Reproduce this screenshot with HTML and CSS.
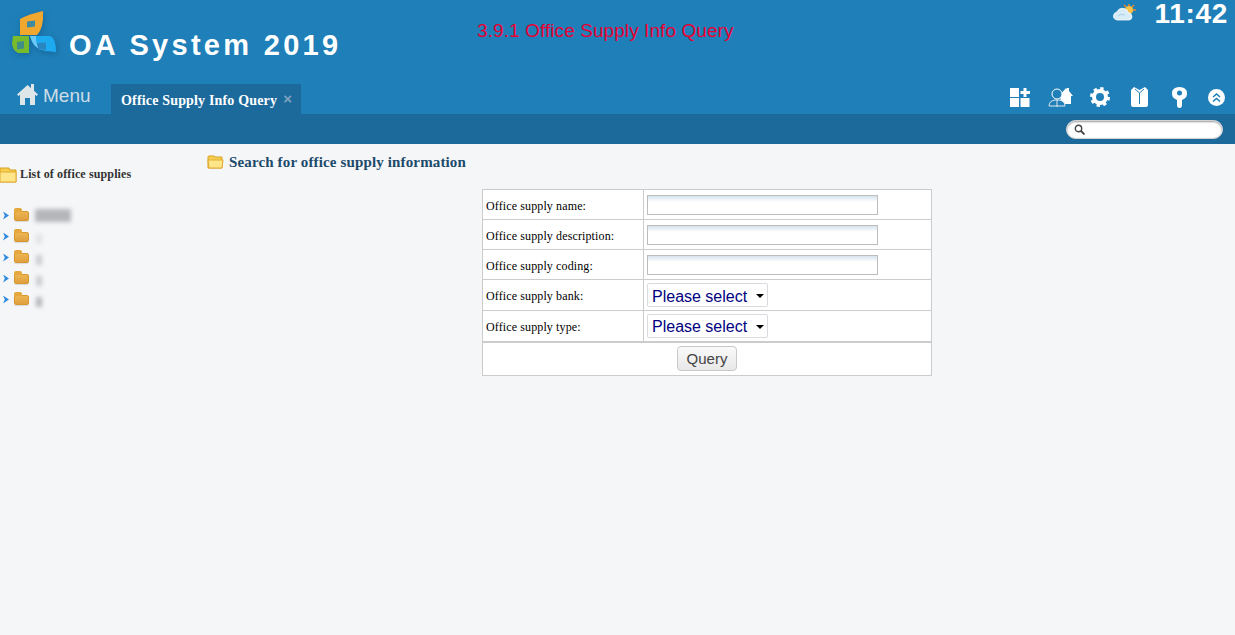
FILE: index.html
```html
<!DOCTYPE html>
<html lang="en">
<head>
<meta charset="utf-8">
<title>OA System 2019</title>
<link rel="stylesheet" href="styles.css">
</head>
<body>
<header class="header">
  <div class="top">
    <div class="brand">
      <svg class="logo" width="50" height="45" viewBox="10 9 50 45">
        <path d="M20 19Q29 14 43 11Q44 28 37 35L20 35Z" fill="#f2a72e"/>
        <path d="M27 21.500L35 20.500L35 26.500L27 27.500Z" fill="#3f8aa0"/>
        <path d="M13 36L29 36L29 53L18 53Q12 50 12 43Z" fill="#78bb2c"/>
        <path d="M17 42L24 41L24 48.500L17 49.500Z" fill="#3f8f88"/>
        <path d="M30 36L50 36Q56 38 56 52L45 51Q33 49 30 36Z" fill="#1eaaf0"/>
        <path d="M30 36L36 36Q35 44 41 50Q33 47 30 36Z" fill="#6cc8f6"/>
        <path d="M37 43L46 42.500L46 50L38 49Z" fill="#2a86c0"/>
      </svg>
      <span class="brand-name">OA System 2019</span>
    </div>
    <div class="page-title">3.9.1 Office Supply Info Query</div>
    <div class="status">
      <svg class="weather" width="23" height="17" viewBox="0 0 23 17">
        <circle cx="16" cy="6" r="4" fill="#f6c24a"/>
        <path d="M16 0V2M21 1L19 3M23 6H20M11 1L13 3" stroke="#e88a2a" stroke-width="1.500"/>
        <path d="M4 16Q0 15 0.500 11.500Q1 8.500 4 8Q6 3.500 11 4.500Q15 5.500 15 8.500Q19 9 19 13Q18.500 16 16 16Z" fill="#d8ecf8" stroke="#f4fafd" stroke-width="0.800"/>
        <path d="M5 12Q8 9 12 11" fill="none" stroke="#a9d0ea"/>
      </svg>
      <span class="clock">11:42</span>
    </div>
  </div>
  <nav class="nav">
    <div class="menu">
      <svg width="21" height="23" viewBox="0 0 21 23">
        <path d="M10.500 3L0 12.500L1.500 14L3 12.700L3 23L8 23L8 16L13 16L13 23L18 23L18 12.700L19.500 14L21 12.500L17 8.800L17 2L14 2L14 6Z" fill="#dfe6ea"/>
      </svg>
      <span class="menu-label">Menu</span>
    </div>
    <div class="tab"><span>Office Supply Info Query</span><span class="tab-close">×</span></div>
    <div class="tools">
      <svg width="20" height="20" viewBox="0 0 20 20" fill="#fff"><rect x="0" y="1" width="9" height="9"/><rect x="0" y="11" width="9" height="9"/><rect x="10.500" y="11" width="9" height="9"/><path d="M13.500 1H16.500V4H20V7H16.500V10H13.500V7H10.500V4H13.500Z"/></svg>
      <svg class="gap-18" width="25" height="20" viewBox="0 0 25 20"><path d="M12 8L18 1L19 2V1H21V4L25 9H23V17H13Z" fill="#fff"/><circle cx="9" cy="7" r="5" fill="#1f7fb8" stroke="#fff"/><path d="M1 19Q1 14 7 13L11 13Q17 14 17 19Z" fill="#1f7fb8" stroke="#dfe8ee"/><path d="M9 12V20" stroke="#dfe8ee"/></svg>
      <svg class="gap-17" width="20" height="20" viewBox="0 0 20 20"><circle cx="10" cy="10" r="6" fill="none" stroke="#fff" stroke-width="4"/><circle cx="10" cy="10" r="8.500" fill="none" stroke="#fff" stroke-width="3" stroke-dasharray="3.300 3.370"/></svg>
      <svg class="gap-21" width="17" height="20" viewBox="0 0 17 20"><path d="M3 0L8.500 3L14 0L17 3V18Q17 20 15 20H2Q0 20 0 18V3Z" fill="#fff"/><path d="M8.500 6V17M4 2L8.500 6L13 2" fill="none" stroke="#1f7fb8"/></svg>
      <svg class="gap-24" width="15" height="21" viewBox="0 0 15 21"><path d="M5 13Q0 11 0 6.500Q0 0 7.500 0Q15 0 15 6.500Q15 11 10 13V18Q10 21 7.500 21Q5 21 5 18Z" fill="#fff"/><circle cx="7.500" cy="6" r="2.500" fill="#1f7fb8"/></svg>
      <svg class="gap-21" width="17" height="17" viewBox="0 0 17 17"><circle cx="8.500" cy="8.500" r="8.500" fill="#fff"/><path d="M5 8L8.500 5L12 8M5 12.500L8.500 9.500L12 12.500" fill="none" stroke="#1f7fb8" stroke-width="1.600"/></svg>
    </div>
  </nav>
</header>
<div class="subbar">
  <div class="search">
    <svg width="11" height="11" viewBox="0 0 11 11"><circle cx="4.500" cy="4.500" r="3.200" fill="none" stroke="#444" stroke-width="1.400"/><path d="M7 7L10.500 10.500" stroke="#444" stroke-width="1.800"/></svg>
  </div>
</div>
<main class="main">
  <aside class="side">
    <div class="side-title">
      <svg width="17" height="16" viewBox="0 0 17 16"><path d="M0 1H9L10 3H16V15H0Z" fill="#f6cf50" stroke="#d9a020"/><path d="M0 5H16V15H0Z" fill="#ffe68a" stroke="#e0aa30"/></svg>
      <span>List of office supplies</span>
    </div>
    <ul class="tree">
      <li class="tree-row"><i class="arrow"></i><i class="folder"></i><i class="blur blur-long"></i></li>
      <li class="tree-row"><i class="arrow"></i><i class="folder"></i><i class="blur blur-faint"></i></li>
      <li class="tree-row"><i class="arrow"></i><i class="folder"></i><i class="blur"></i></li>
      <li class="tree-row"><i class="arrow"></i><i class="folder"></i><i class="blur"></i></li>
      <li class="tree-row"><i class="arrow"></i><i class="folder"></i><i class="blur blur-dark"></i></li>
    </ul>
  </aside>
  <section class="content">
    <h2 class="content-title">
      <svg width="17" height="14" viewBox="0 0 17 14"><path d="M1 2Q1 1 2 1H7L8 2H15V13H1Z" fill="#f6cf50" stroke="#d9a020"/><path d="M1 5H16L15 13H2Z" fill="#ffe68a" stroke="#e0aa30"/></svg>
      <span>Search for office supply information</span>
    </h2>
    <table class="form">
      <tr class="row-a"><th>Office supply name:</th><td><input class="field" type="text"></td></tr>
      <tr class="row-a"><th>Office supply description:</th><td><input class="field" type="text"></td></tr>
      <tr class="row-a"><th>Office supply coding:</th><td><input class="field" type="text"></td></tr>
      <tr class="row-b"><th>Office supply bank:</th><td><span class="pick"><select><option>Please select</option></select></span></td></tr>
      <tr class="row-b row-last"><th>Office supply type:</th><td><span class="pick"><select><option>Please select</option></select></span></td></tr>
      <tr class="row-c"><td colspan="2"><button class="query" type="button">Query</button></td></tr>
    </table>
  </section>
</main>
</body>
</html>
```
FILE: styles.css
```css
* { box-sizing: border-box; }
html, body { height: 100%; }
body {
  margin: 0;
  background: #f5f6f8;
  font-family: "Liberation Sans", Arial, sans-serif;
  overflow: hidden;
}
.header { height: 114px; background: #1f7fb8; color: #fff; }
.top { height: 84px; display: flex; align-items: flex-start; }
.brand { width: 477px; display: flex; align-items: flex-start; padding: 9px 0 0 10px; }
.logo { flex: none; filter: drop-shadow(1px 2px 3px rgba(0, 50, 90, 0.3)); }
.brand-name {
  margin: 19px 0 0 9px;
  font-size: 29px;
  font-weight: bold;
  letter-spacing: 3.3px;
  line-height: 34px;
  white-space: nowrap;
}
.page-title { margin-top: 20px; font-size: 19px; letter-spacing: 0.08px; line-height: 22px; color: #e60033; white-space: nowrap; }
.status { margin-left: auto; display: flex; align-items: flex-start; padding-right: 7px; }
.weather { margin: 4px 18px 0 0; }
.clock { font-size: 28px; font-weight: bold; line-height: 28px; letter-spacing: 0.7px; }
.nav { height: 30px; display: flex; align-items: flex-end; }
.menu {
  width: 111px;
  height: 32px;
  align-self: flex-start;
  margin-top: -2px;
  padding-left: 17px;
  display: flex;
  align-items: flex-start;
  gap: 5px;
  font-size: 19px;
  line-height: 24px;
  color: #cfdde6;
}
.menu-label { margin-top: 2px; }
.tab {
  width: 190px;
  height: 30px;
  background: #1c6a9c;
  padding: 8px 0 0 10px;
  font-family: "Liberation Serif", serif;
  font-weight: bold;
  font-size: 14px;
  letter-spacing: 0.17px;
  line-height: 17px;
  white-space: nowrap;
  display: flex;
  gap: 6px;
}
.tab-close { color: #7ea3bd; font-family: "Liberation Sans", sans-serif; font-size: 15px; line-height: 14px; }
.tools {
  margin-left: auto;
  align-self: flex-start;
  padding: 1px 10px 0 0;
  display: flex;
  align-items: center;
  height: 25px;
}
.gap-17 { margin-left: 17px; }
.gap-18 { margin-left: 18px; }
.gap-21 { margin-left: 21px; }
.gap-24 { margin-left: 24px; }
.subbar {
  height: 30px;
  background: #1c6a9c;
  display: flex;
  justify-content: flex-end;
  padding: 6px 12px 0 0;
}
.search {
  width: 157px;
  height: 19px;
  background: #fff;
  border-radius: 10px;
  border: 1px solid #d4d4d4;
  box-shadow: inset 0 1px 2px #999;
  padding: 3px 0 0 7px;
  display: flex;
  align-items: flex-start;
}
.main { display: flex; font-family: "Liberation Serif", serif; }
.side { width: 207px; flex: none; }
.side-title {
  margin-top: 22px;
  display: flex;
  align-items: center;
  gap: 3px;
  height: 17px;
  font-size: 12px;
  font-weight: bold;
  letter-spacing: 0.13px;
  color: #333;
}
.tree { list-style: none; margin: 22px 0 0; padding: 0 0 0 3px; }
.tree-row { height: 21px; display: flex; align-items: center; }
.arrow {
  width: 6px;
  height: 8px;
  background: #2d8ae0;
  clip-path: polygon(0 0, 100% 50%, 0 100%, 30% 50%);
}
.folder {
  position: relative;
  width: 15px;
  height: 10px;
  margin: 0 0 0 5px;
  background: linear-gradient(#ecb551, #e0a040);
  border: 1px solid #d8982e;
  border-radius: 2px;
  box-shadow: 0 1px 1px rgba(0, 0, 0, 0.12);
}
.folder::before {
  content: "";
  position: absolute;
  left: -1px;
  top: -4px;
  width: 8px;
  height: 4px;
  background: #e5a83e;
  border-radius: 2px 2px 0 0;
}
.blur {
  width: 6px;
  height: 10px;
  margin-left: 7px;
  background: #c9cbce;
  filter: blur(2px);
}
.blur-long { width: 36px; height: 13px; margin-left: 6px; background: #b4b6b9; }
.blur-faint { background: #e2e3e6; }
.blur-dark { background: #b5b7ba; }
.tree-row:nth-child(n+2) .blur { margin-top: 4px; }
.content { flex: 1; }
.content-title {
  margin: 8px 0 0;
  height: 20px;
  display: flex;
  align-items: center;
  gap: 5px;
  font-size: 15px;
  font-weight: bold;
  letter-spacing: 0.14px;
  line-height: 17px;
  color: #1b4a6b;
}
.form {
  margin: 17px 0 0 275px;
  width: 450px;
  border-collapse: collapse;
  background: #fff;
  font-size: 12px;
  letter-spacing: 0.12px;
  color: #000;
}
.form th, .form td { border: 1px solid #cccccc; padding: 0; }
.form th { width: 161px; padding-left: 3px; font-weight: normal; text-align: left; }
.form td { padding-left: 3px; }
.row-a { height: 30px; }
.row-a th { padding-top: 4px; }
.row-b { height: 31px; }
.row-b th { padding-top: 2px; }
.row-b.row-last th { padding-top: 4px; }
.row-c { height: 34px; }
.row-c td { text-align: center; padding: 0; border-top-width: 2px; }
.field {
  display: block;
  width: 231px;
  height: 20px;
  border: 1px solid #bdbdbd;
  padding: 0;
  background: linear-gradient(#d5e3ee, #fff 6px);
}
.pick { position: relative; display: block; width: 121px; height: 24px; }
.pick::after {
  content: "";
  position: absolute;
  right: 4px;
  top: 11px;
  border: 4px solid transparent;
  border-top-color: #000;
  border-bottom-width: 0;
  pointer-events: none;
}
.pick select {
  appearance: none;
  width: 121px;
  height: 24px;
  border: 1px solid #d8dce0;
  border-radius: 2px;
  background: #fff;
  padding: 2px 0 0 4px;
  font-family: "Liberation Sans", sans-serif;
  font-size: 16px;
  letter-spacing: 0;
  color: #000080;
}
.query {
  width: 60px;
  height: 25px;
  border: 1px solid #c8c8c8;
  border-radius: 4px;
  background: linear-gradient(#fafafa, #e8e8e8);
  padding: 0;
  font-family: "Liberation Sans", sans-serif;
  font-size: 15px;
  letter-spacing: 0;
  color: #444;
  display: block;
  margin: -1px auto 0;
}
```
